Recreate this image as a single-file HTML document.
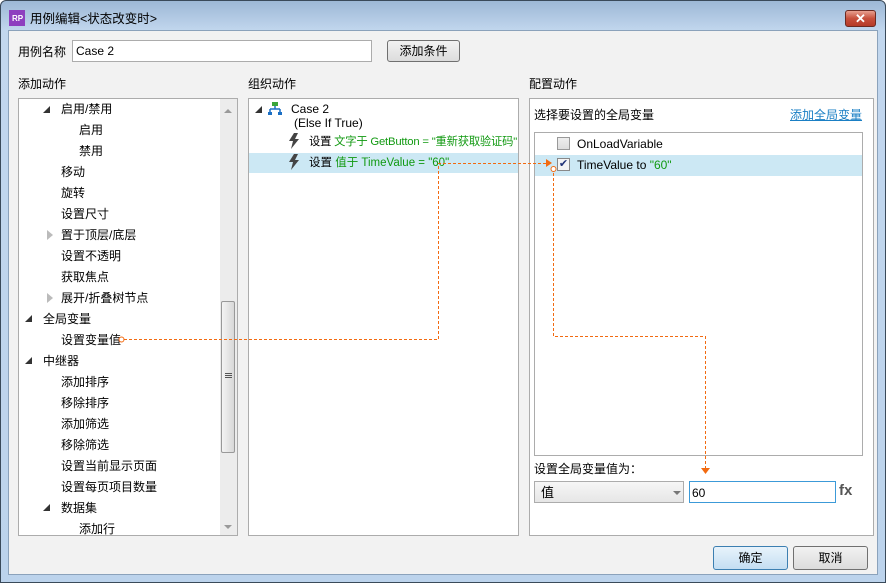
<!DOCTYPE html>
<html><head><meta charset="utf-8"><style>
*{margin:0;padding:0;box-sizing:border-box}
body{width:886px;height:583px;overflow:hidden;background:#fff;font-family:"Liberation Sans","Noto Sans CJK SC",sans-serif;font-size:12px;line-height:14px;color:#000;position:relative}
.win{position:absolute;left:0;top:0;width:886px;height:583px;background:linear-gradient(#9db8d6,#c2d7ee 30px,#bcd3ec);border:1px solid #3a4a5a;border-radius:6px 6px 0 0}
.content{position:absolute;left:8px;top:30px;width:870px;height:545px;background:#f2f2f2;border:1px solid #8ba2bb}
.abs{position:absolute;white-space:nowrap}
.panel{position:absolute;background:#fff;border:1px solid #acacac}
.tri{position:absolute;width:0;height:0;border-left:7px solid transparent;border-bottom:7px solid #333}
.trio{position:absolute;width:0;height:0;border-top:5px solid transparent;border-bottom:5px solid transparent;border-left:6px solid #bbb}
.btn{position:absolute;border:1px solid #707070;border-radius:3px;background:linear-gradient(#f2f2f2,#dcdcdc);text-align:center;line-height:21px}
.g{color:#119911}
</style></head><body>
<div class="win"></div>
<div class="abs" style="left:9px;top:10px;width:16px;height:16px;background:#8e3fbf"><span style="position:absolute;left:3px;top:2px;font-size:8px;color:#fff;font-weight:bold">RP</span></div>
<div class="abs" style="left:30px;top:12px;font-size:12.5px">用例编辑&lt;状态改变时&gt;</div>
<div class="abs" style="left:845px;top:10px;width:31px;height:17px;border:1px solid #6b2a22;border-radius:3px;background:linear-gradient(#e8a090,#c7503c 50%,#b53a28);color:#fff;font-weight:bold;text-align:center;line-height:15px;font-size:13px">✕</div>
<div class="content"></div>

<div class="abs" style="left:18px;top:45px">用例名称</div>
<div class="abs" style="left:72px;top:40px;width:300px;height:22px;background:#fff;border:1px solid #acacac;padding:3px 3px">Case 2</div>
<div class="btn" style="left:387px;top:40px;width:73px;height:22px">添加条件</div>

<div class="abs" style="left:18px;top:77px">添加动作</div>
<div class="abs" style="left:248px;top:77px">组织动作</div>
<div class="abs" style="left:529px;top:77px">配置动作</div>

<div class="panel" style="left:18px;top:98px;width:220px;height:438px;overflow:hidden">
<div style="position:absolute;right:0;top:0;width:17px;height:436px;background:#ececec"></div>
<div style="position:absolute;right:2px;top:202px;width:14px;height:152px;border:1px solid #999;border-radius:2px;background:linear-gradient(90deg,#f4f4f4,#d8d8d8)"></div>
<div style="position:absolute;right:5px;top:274px;width:7px;height:5px;border-top:1px solid #555;border-bottom:1px solid #555"></div>
<div style="position:absolute;right:5px;top:276px;width:7px;border-top:1px solid #555"></div>
<div style="position:absolute;right:5px;top:10px;border-left:4px solid transparent;border-right:4px solid transparent;border-bottom:4px solid #999"></div>
<div style="position:absolute;right:5px;top:426px;border-left:4px solid transparent;border-right:4px solid transparent;border-top:4px solid #999"></div>
</div>
<div class="tri" style="left:43px;top:106px"></div><div class="abs" style="left:61px;top:102px">启用/禁用</div>
<div class="abs" style="left:79px;top:123px">启用</div>
<div class="abs" style="left:79px;top:144px">禁用</div>
<div class="abs" style="left:61px;top:165px">移动</div>
<div class="abs" style="left:61px;top:186px">旋转</div>
<div class="abs" style="left:61px;top:207px">设置尺寸</div>
<div class="trio" style="left:47px;top:230px"></div><div class="abs" style="left:61px;top:228px">置于顶层/底层</div>
<div class="abs" style="left:61px;top:249px">设置不透明</div>
<div class="abs" style="left:61px;top:270px">获取焦点</div>
<div class="trio" style="left:47px;top:293px"></div><div class="abs" style="left:61px;top:291px">展开/折叠树节点</div>
<div class="tri" style="left:25px;top:315px"></div><div class="abs" style="left:43px;top:312px">全局变量</div>
<div class="abs" style="left:61px;top:333px">设置变量值</div>
<div class="tri" style="left:25px;top:357px"></div><div class="abs" style="left:43px;top:354px">中继器</div>
<div class="abs" style="left:61px;top:375px">添加排序</div>
<div class="abs" style="left:61px;top:396px">移除排序</div>
<div class="abs" style="left:61px;top:417px">添加筛选</div>
<div class="abs" style="left:61px;top:438px">移除筛选</div>
<div class="abs" style="left:61px;top:459px">设置当前显示页面</div>
<div class="abs" style="left:61px;top:480px">设置每页项目数量</div>
<div class="tri" style="left:43px;top:504px"></div><div class="abs" style="left:61px;top:501px">数据集</div>
<div class="abs" style="left:79px;top:522px;height:13px;overflow:hidden">添加行</div>

<div class="panel" style="left:248px;top:98px;width:271px;height:438px"></div>
<div class="abs" style="left:249px;top:153px;width:269px;height:20px;background:#cce8f4"></div>
<div class="tri" style="left:255px;top:106px"></div>
<svg class="abs" style="left:268px;top:102px" width="14" height="14"><rect x="4" y="0" width="6" height="4" fill="#3aa53a"/><path d="M7 4v3M2 7h10M2 7v3M12 7v3" stroke="#1b6fc4" stroke-width="1.5" fill="none"/><rect x="0" y="10" width="4" height="3" fill="#1b6fc4"/><rect x="10" y="10" width="4" height="3" fill="#1b6fc4"/></svg>
<div class="abs" style="left:291px;top:102px">Case 2</div>
<div class="abs" style="left:294px;top:116px">(Else If True)</div>
<svg class="abs" style="left:288px;top:133px" width="12" height="16"><path d="M6 0L1 8h4L3 16l8-10H7l3-6z" fill="#444"/></svg>
<div class="abs" style="left:309px;top:135px;font-size:11.3px;letter-spacing:-0.2px">设置 <span class="g">文字于 GetButton = "重新获取验证码"</span></div>
<svg class="abs" style="left:288px;top:154px" width="12" height="16"><path d="M6 0L1 8h4L3 16l8-10H7l3-6z" fill="#444"/></svg>
<div class="abs" style="left:309px;top:156px;font-size:11.5px">设置 <span class="g">值于 TimeValue = "60"</span></div>

<div class="panel" style="left:529px;top:98px;width:345px;height:438px"></div>
<div class="abs" style="left:534px;top:108px">选择要设置的全局变量</div>
<div class="abs" style="left:790px;top:108px;color:#1a7fc4;text-decoration:underline">添加全局变量</div>
<div class="panel" style="left:534px;top:132px;width:329px;height:324px"></div>
<div class="abs" style="left:535px;top:155px;width:327px;height:21px;background:#cce8f4"></div>
<div class="abs" style="left:557px;top:137px;width:13px;height:13px;border:1px solid #999;background:linear-gradient(#eee,#ddd)"></div>
<div class="abs" style="left:577px;top:137px">OnLoadVariable</div>
<div class="abs" style="left:557px;top:158px;width:13px;height:13px;border:1px solid #888;background:#f4f4f4;color:#223377;font-size:11px;line-height:11px;text-align:center">✔</div>
<div class="abs" style="left:577px;top:158px">TimeValue to <span class="g">"60"</span></div>
<div class="abs" style="left:534px;top:462px">设置全局变量值为：</div>
<div class="abs" style="left:534px;top:481px;width:150px;height:22px;border:1px solid #acacac;background:linear-gradient(#f6f6f6,#e6e6e6);padding:3px 6px;font-size:13px;line-height:15px">值</div>
<div class="abs" style="left:673px;top:491px;border-left:4px solid transparent;border-right:4px solid transparent;border-top:4px solid #777"></div>
<div class="abs" style="left:689px;top:481px;width:147px;height:22px;border:1px solid #3c9ad8;background:#fff;padding:4px 2px">60</div>
<div class="abs" style="left:839px;top:484px;font-weight:bold;font-size:15px;color:#555">fx</div>

<div class="btn" style="left:713px;top:546px;width:75px;height:24px;border-color:#3c7fb1;background:linear-gradient(#e8f3fb,#c4def2);line-height:22px">确定</div>
<div class="btn" style="left:793px;top:546px;width:75px;height:24px;line-height:22px">取消</div>

<svg class="abs" style="left:0;top:0" width="886" height="583" shape-rendering="crispEdges">
<g stroke="#f26a10" stroke-width="1" fill="none" stroke-dasharray="3,2">
<path d="M124 339.5H438.5V163.5H548"/>
<path d="M553.5 168V336.5H705.5V468"/>
</g>
<circle cx="121.5" cy="339.5" r="2.5" fill="#fff" stroke="#f26a10" shape-rendering="auto"/>
<circle cx="553.5" cy="169" r="2.5" fill="#fff" stroke="#f26a10" shape-rendering="auto"/>
<path d="M546 159l6 4-6 4z" fill="#f26a10" shape-rendering="auto"/>
<path d="M701 468h9l-4.5 6z" fill="#f26a10" shape-rendering="auto"/>
</svg>
</body></html>
